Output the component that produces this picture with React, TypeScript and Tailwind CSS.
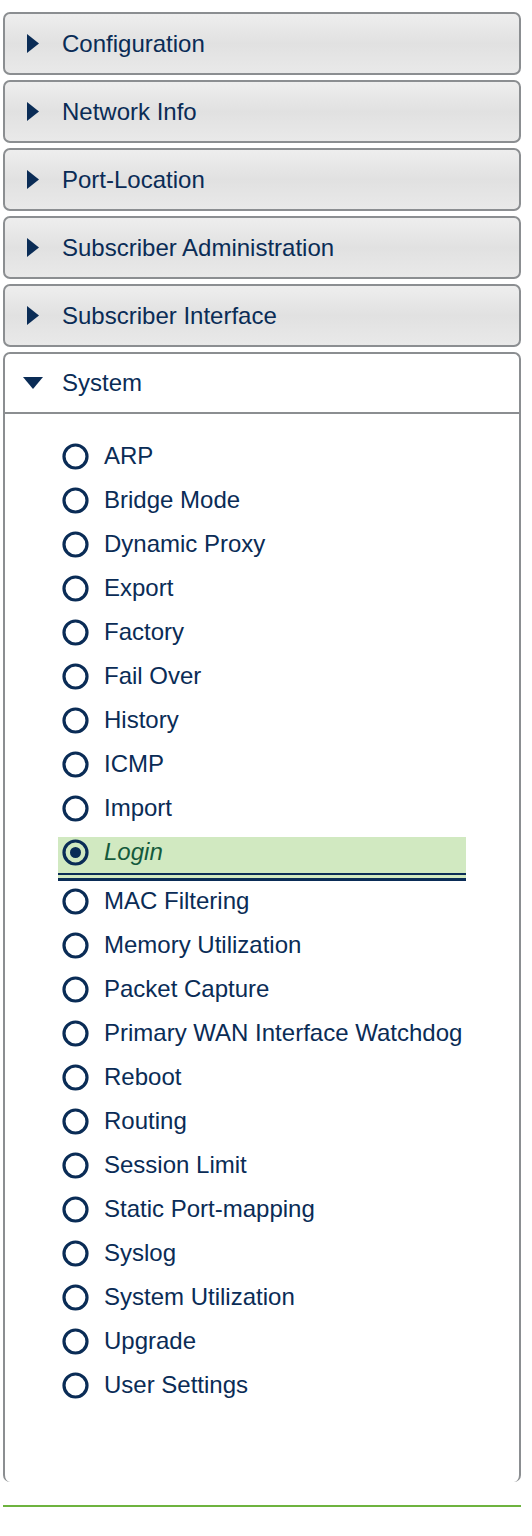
import React from 'react';

const sections = [
  'Configuration',
  'Network Info',
  'Port-Location',
  'Subscriber Administration',
  'Subscriber Interface',
];

const systemItems = [
  'ARP',
  'Bridge Mode',
  'Dynamic Proxy',
  'Export',
  'Factory',
  'Fail Over',
  'History',
  'ICMP',
  'Import',
  'Login',
  'MAC Filtering',
  'Memory Utilization',
  'Packet Capture',
  'Primary WAN Interface Watchdog',
  'Reboot',
  'Routing',
  'Session Limit',
  'Static Port-mapping',
  'Syslog',
  'System Utilization',
  'Upgrade',
  'User Settings',
];

const Radio: React.FC<{ checked?: boolean }> = ({ checked }) => (
  <svg width="27" height="27" viewBox="0 0 27 27" className="shrink-0">
    <circle cx="13.5" cy="13.5" r="11.5" fill="none" stroke="#0a2c56" strokeWidth="3.2" />
    {checked && <circle cx="13.5" cy="13.5" r="5.5" fill="#0a2c56" />}
  </svg>
);

export default function App() {
  const selected = 'Login';

  return (
    <div className="min-h-screen bg-white pt-[12px] pl-[3px] pr-[11px] font-['Liberation_Sans',Arial,sans-serif] text-[24px] text-[#0a2c56]">
      {/* Collapsed sections */}
      {sections.map((label) => (
        <div
          key={label}
          className="mb-[5px] flex h-[63px] items-center rounded-[7px] border-2 border-[#8b8e91] bg-gradient-to-b from-[#eeeeee] via-[#e1e1e1] to-[#e9e9e9] pl-[22px]"
        >
          <svg width="12" height="19" viewBox="0 0 12 19" className="shrink-0">
            <polygon points="0,0 12,9.5 0,19" fill="#0a2c56" />
          </svg>
          <span className="ml-[23px] leading-none">{label}</span>
        </div>
      ))}

      {/* Expanded section */}
      <div className="rounded-[7px] border-2 border-b-0 border-[#8b8e91] bg-white">
        <div className="flex h-[60px] items-center border-b-2 border-[#8b8e91] pl-[18px]">
          <svg width="20" height="12" viewBox="0 0 20 12" className="shrink-0">
            <polygon points="0,0 20,0 10,12" fill="#0a2c56" />
          </svg>
          <span className="ml-[19px] leading-none">System</span>
        </div>

        <ul className="pt-[20px] pb-[75px] pl-[53px]">
          {systemItems.map((item) =>
            item === selected ? (
              <li key={item} className="mt-[7px] mb-[-2px] w-[408px]">
                <div className="flex h-[36px] items-center bg-[#d1e9c1] pb-[6px] pl-[4px]">
                  <Radio checked />
                  <span className="ml-[15px] italic leading-none text-[#145a3c]">{item}</span>
                </div>
                <div className="h-[2px] bg-[#0a2c56]" />
                <div className="h-[3px] bg-[#d1e9c1]" />
                <div className="h-[3px] bg-[#0a2c56]" />
              </li>
            ) : (
              <li key={item} className="flex h-[44px] w-[408px] items-center pl-[4px]">
                <Radio />
                <span className="ml-[15px] leading-none">{item}</span>
              </li>
            )
          )}
        </ul>
      </div>

      <div className="mt-[23px] h-[2px] bg-[#6db33f]" />
    </div>
  );
}
